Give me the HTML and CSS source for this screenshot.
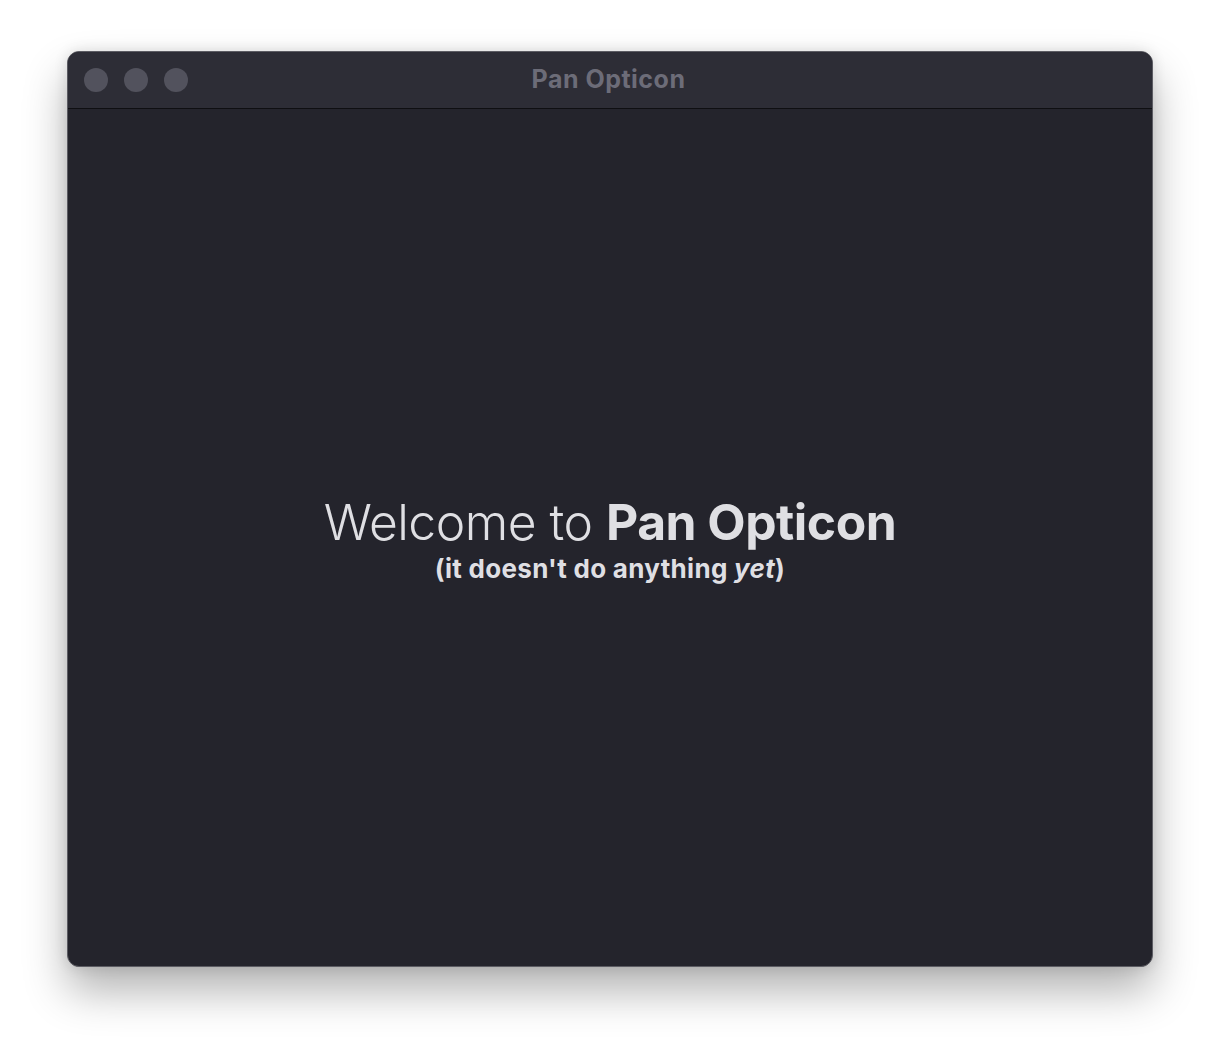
FILE: index.html
```html
<!DOCTYPE html>
<html>
<head>
<meta charset="utf-8">
<link rel="stylesheet" href="styles.css">
</head>
<body>
<div class="window">
  <div class="titlebar">
    <div class="lights">
      <span class="light"></span>
      <span class="light"></span>
      <span class="light"></span>
    </div>
    <div class="title">Pan Opticon</div>
  </div>
  <div class="content">
    <div class="welcome">Welcome to <b>Pan Opticon</b></div>
    <div class="sub">(it doesn't do anything <i>yet</i>)</div>
  </div>
</div>
</body>
</html>
```
FILE: styles.css
```css
html, body {
  margin: 0;
  padding: 0;
  background: #ffffff;
  font-family: Inter, "Noto Sans", sans-serif;
}
body {
  padding: 51px 0 0 67px;
  min-height: 1050px;
  box-sizing: border-box;
}
.window {
  width: 1084px;
  height: 914px;
  border: 1px solid #5c5c63;
  border-radius: 12px;
  background: #24242c;
  box-shadow: 0 24px 44px rgba(0,0,0,0.30), 0 0 14px rgba(0,0,0,0.12);
  overflow: hidden;
  display: flex;
  flex-direction: column;
}
.titlebar {
  height: 56px;
  background: #2d2d36;
  border-bottom: 1px solid #0f0f12;
  position: relative;
  display: flex;
  align-items: center;
  justify-content: center;
  flex-shrink: 0;
}
.lights {
  position: absolute;
  left: 16px;
  top: 16px;
  display: flex;
  gap: 16px;
}
.light {
  width: 24px;
  height: 24px;
  border-radius: 50%;
  background: #52525d;
}
.title {
  color: #6c6c78;
  font-weight: 700;
  font-size: 25px;
  letter-spacing: 0.5px;
  margin-right: 3px;
  margin-bottom: 2px;
}
.content {
  flex: 1;
  display: flex;
  flex-direction: column;
  align-items: center;
  justify-content: center;
  color: #dfdfe3;
  padding-top: 4px;
}
.welcome {
  font-size: 49.8px;
  font-weight: 300;
  letter-spacing: -0.5px;
  line-height: 1.1;
}
.welcome b {
  font-weight: 700;
}
.sub {
  font-size: 26px;
  font-weight: 700;
  letter-spacing: 0.3px;
  line-height: 1.2;
  margin-top: 4px;
}
.sub i {
  font-style: italic;
}
```
